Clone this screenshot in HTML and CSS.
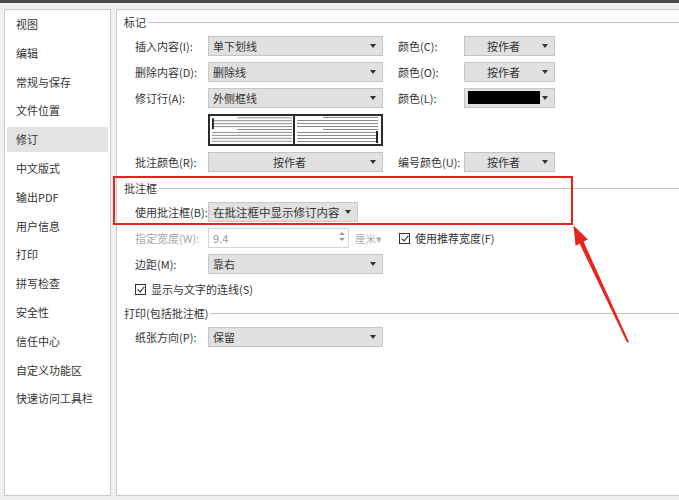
FILE: index.html
```html
<!DOCTYPE html>
<html lang="zh-CN">
<head>
    <meta charset="UTF-8">
    <meta name="viewport" content="width=device-width, initial-scale=1.0">
    <title>选项 - 修订</title>
    <link rel="stylesheet" href="styles.css">
</head>
<body>
    <div class="ventana">
        <div class="barra-titulo"></div>

        <div class="cuerpo">
            <!-- lista de categorias a la izquierda -->
            <ul class="menu">
                <li>视图</li>
                <li>编辑</li>
                <li>常规与保存</li>
                <li>文件位置</li>
                <li class="activo">修订</li>
                <li>中文版式</li>
                <li>输出PDF</li>
                <li>用户信息</li>
                <li>打印</li>
                <li>拼写检查</li>
                <li>安全性</li>
                <li>信任中心</li>
                <li>自定义功能区</li>
                <li>快速访问工具栏</li>
            </ul>

            <div class="panel">
                <!-- marcas -->
                <div class="grupo-titulo"><span>标记</span></div>
                <div class="rejilla marcas">
                    <label>插入内容(I):</label>
                    <div class="combo">单下划线</div>
                    <label class="col3">颜色(C):</label>
                    <div class="combo centrado">按作者</div>

                    <label>删除内容(D):</label>
                    <div class="combo">删除线</div>
                    <label class="col3">颜色(O):</label>
                    <div class="combo centrado">按作者</div>

                    <label>修订行(A):</label>
                    <div class="combo">外侧框线</div>
                    <label class="col3">颜色(L):</label>
                    <div class="combo"><span class="muestra-negra"></span></div>

                    <span></span>
                    <div class="vista-previa">
                        <svg width="85" height="28" viewBox="0 0 85 28">
                            <g stroke="#8a8a8a" stroke-width="1">
                                <line x1="28" y1="1.5" x2="84" y2="1.5"/>
                                <line x1="4" y1="4.5" x2="84" y2="4.5"/>
                                <line x1="4" y1="7.5" x2="84" y2="7.5"/>
                                <line x1="4" y1="10.5" x2="84" y2="10.5"/>
                                <line x1="28" y1="13.5" x2="84" y2="13.5"/>
                                <line x1="2" y1="16.5" x2="84" y2="16.5"/>
                                <line x1="2" y1="19.5" x2="84" y2="19.5"/>
                                <line x1="2" y1="22.5" x2="84" y2="22.5"/>
                                <line x1="2" y1="25.5" x2="84" y2="25.5"/>
                            </g>
                            <rect x="2" y="2" width="2" height="11" fill="#222"/>
                        </svg>
                        <svg width="85" height="28" viewBox="0 0 85 28">
                            <g stroke="#8a8a8a" stroke-width="1">
                                <line x1="28" y1="1.5" x2="83" y2="1.5"/>
                                <line x1="2" y1="4.5" x2="83" y2="4.5"/>
                                <line x1="2" y1="7.5" x2="83" y2="7.5"/>
                                <line x1="2" y1="10.5" x2="83" y2="10.5"/>
                                <line x1="28" y1="13.5" x2="83" y2="13.5"/>
                                <line x1="2" y1="16.5" x2="81" y2="16.5"/>
                                <line x1="2" y1="19.5" x2="81" y2="19.5"/>
                                <line x1="2" y1="22.5" x2="81" y2="22.5"/>
                                <line x1="2" y1="25.5" x2="81" y2="25.5"/>
                            </g>
                            <rect x="81" y="15" width="2" height="12" fill="#222"/>
                        </svg>
                    </div>
                    <span></span>
                    <span></span>

                    <label>批注颜色(R):</label>
                    <div class="combo centrado">按作者</div>
                    <label class="col3">编号颜色(U):</label>
                    <div class="combo centrado">按作者</div>
                </div>

                <!-- globos -->
                <div class="grupo-titulo segundo"><span>批注框</span></div>
                <div class="rejilla">
                    <label>使用批注框(B):</label>
                    <div class="combo corto">在批注框中显示修订内容</div>
                    <span></span>
                    <span></span>

                    <label class="apagado">指定宽度(W):</label>
                    <div class="ancho">
                        <div class="campo">9.4
                            <span class="giro"><i class="arriba"></i><i class="abajo"></i></span>
                        </div>
                        <span class="unidad">厘米▾</span>
                    </div>
                    <label class="col3 doble casilla"><span class="check"></span>使用推荐宽度(F)</label>

                    <label>边距(M):</label>
                    <div class="combo">靠右</div>
                    <span></span>
                    <span></span>
                </div>
                <label class="casilla linea-sola"><span class="check"></span>显示与文字的连线(S)</label>

                <!-- impresion -->
                <div class="grupo-titulo tercero"><span>打印(包括批注框)</span></div>
                <div class="rejilla">
                    <label>纸张方向(P):</label>
                    <div class="combo">保留</div>
                    <span></span>
                    <span></span>
                </div>
            </div>
        </div>

        <div class="marco-rojo"></div>
        <svg class="flecha" width="679" height="500" viewBox="0 0 679 500">
            <polygon points="573.5,225.5 588,239.5 583.6,241.6 629,342 627,342.6 579.6,243.6 575.6,246"
                     fill="#e8251c"/>
        </svg>
    </div>
</body>
</html>
```

FILE: styles.css
```css
* {
    box-sizing: border-box;
}

body {
    margin: 0;
    background-color: #f0f0f0;
    font-family: "Noto Sans CJK SC", "Microsoft YaHei", sans-serif;
    font-size: 11px;
    color: #333;
}

.ventana {
    position: relative;
    width: 679px;
    height: 500px;
    overflow: hidden;
    background-color: #f0f0f0;
}

.barra-titulo {
    height: 3px;
    background-color: #4a4a4a;
}

.cuerpo {
    display: flex;
    gap: 5px;
    height: 497px;
    padding: 6px 0 4px 4px;
}

/* menu lateral */

.menu {
    width: 107px;
    margin: 0;
    padding: 2px 2px 0;
    list-style: none;
    background-color: white;
    border: 1px solid #c9c9c9;
}

.menu li {
    height: 25px;
    line-height: 25px;
    margin-bottom: 3.8px;
    padding-left: 9px;
    white-space: nowrap;
}

.menu .activo {
    background-color: #e3e3e3;
}

/* panel derecho */

.panel {
    flex: 1;
    padding: 5px 0 0 7px;
    background-color: white;
    border: 1px solid #c9c9c9;
    border-right: none;
}

.grupo-titulo {
    display: flex;
    align-items: center;
    gap: 2px;
    height: 14px;
    line-height: 14px;
}

.grupo-titulo::after {
    content: "";
    flex: 1;
    height: 1px;
    background-color: #c4c4c4;
}

.grupo-titulo.segundo {
    margin-top: 9px;
}

.grupo-titulo.tercero {
    margin-top: 8px;
}

.rejilla {
    display: grid;
    grid-template-columns: 73px 175px 81px 91px;
    grid-auto-rows: 20px;
    row-gap: 6px;
    align-items: center;
    margin: 7px 0 0 11px;
}

.rejilla.marcas {
    grid-template-rows: 20px 20px 20px 32px 20px;
}

.rejilla label {
    white-space: nowrap;
}

.col3 {
    padding-left: 15px;
}

.doble {
    grid-column: span 2;
}

.apagado {
    color: #a8a8a8;
}

/* listas desplegables */

.combo {
    position: relative;
    height: 20px;
    line-height: 18px;
    padding: 0 16px 0 4px;
    background-color: #e1e1e1;
    border: 1px solid #c6c6c6;
    white-space: nowrap;
}

.combo::after {
    content: "";
    position: absolute;
    right: 6px;
    top: 7px;
    border-left: 3.5px solid transparent;
    border-right: 3.5px solid transparent;
    border-top: 4px solid #333;
}

.combo.centrado {
    text-align: center;
}

.combo.corto {
    width: 150px;
    font-size: 11.5px;
}

.muestra-negra {
    display: block;
    width: 72px;
    height: 13px;
    margin-top: 2px;
    margin-left: -1px;
    background-color: #000;
}

.vista-previa {
    display: flex;
    height: 32px;
    border: 2px solid #2b2b2b;
}

.vista-previa svg:first-child {
    border-right: 2px solid #2b2b2b;
}

/* ancho especificado */

.ancho {
    display: flex;
    align-items: center;
    gap: 6px;
}

.campo {
    position: relative;
    width: 141px;
    height: 20px;
    line-height: 18px;
    padding-left: 4px;
    color: #999;
    border: 1px solid #d6d6d6;
}

.giro {
    position: absolute;
    right: 3px;
    top: 3px;
    display: flex;
    flex-direction: column;
    gap: 3px;
}

.giro i {
    display: block;
    border-left: 3px solid transparent;
    border-right: 3px solid transparent;
}

.giro .arriba {
    border-bottom: 3px solid #999;
}

.giro .abajo {
    border-top: 3px solid #999;
}

.unidad {
    color: #b0b0b0;
    font-size: 10.5px;
}

/* casillas */

.casilla {
    display: flex;
    align-items: center;
    gap: 5px;
    white-space: nowrap;
}

.check {
    position: relative;
    width: 11px;
    height: 11px;
    border: 1px solid #333;
    background-color: white;
}

.check::after {
    content: "";
    position: absolute;
    left: 3px;
    top: 0;
    width: 3px;
    height: 6px;
    border-right: 1.5px solid #222;
    border-bottom: 1.5px solid #222;
    transform: rotate(40deg);
}

.casilla.doble {
    padding-left: 16px;
}

.linea-sola {
    height: 18px;
    margin: 6px 0 0 11px;
}

/* anotacion en rojo */

.marco-rojo {
    position: absolute;
    left: 113px;
    top: 176px;
    width: 460px;
    height: 49px;
    border: 2px solid #e3231c;
}

.flecha {
    position: absolute;
    left: 0;
    top: 0;
    pointer-events: none;
}
```
